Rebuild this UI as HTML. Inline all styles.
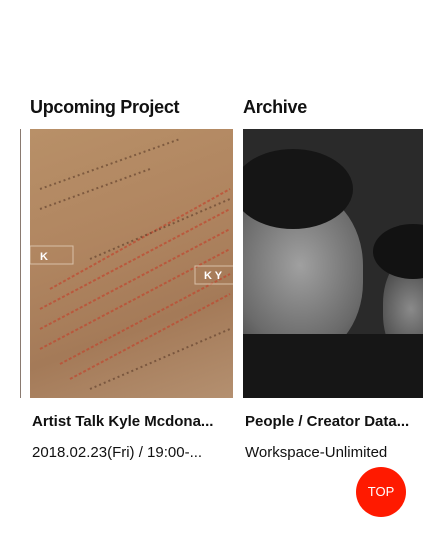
<!DOCTYPE html>
<html><head><meta charset="utf-8"><style>
*{margin:0;padding:0;box-sizing:border-box}
body{width:423px;height:540px;background:#fff;font-family:"Liberation Sans",Arial,sans-serif;position:relative;overflow:hidden;color:#111}
.h{position:absolute;top:97px;font-weight:bold;font-size:18px;letter-spacing:-0.3px}
.img{position:absolute;top:129px;height:269px}
.t{position:absolute;top:413px;font-weight:bold;font-size:15px;white-space:nowrap}
.s{position:absolute;top:444px;font-size:15px;white-space:nowrap}
.top{position:absolute;left:356px;top:467px;width:50px;height:50px;border-radius:50%;background:#ff1a00;color:#fff;font-size:13px;text-align:center;line-height:50px}
</style></head><body>
<div class="h" style="left:30px">Upcoming Project</div>
<div class="h" style="left:243px">Archive</div>
<div style="position:absolute;left:20px;top:129px;width:1px;height:269px;background:#8a7a70"></div>
<div class="img" style="left:30px;width:203px;background:linear-gradient(160deg,#b89068 0%,#b08560 40%,#a47a58 70%,#b49070 100%)">
<svg width="203" height="269" style="position:absolute;left:0;top:0">
<g stroke="#c04830" stroke-width="2" stroke-dasharray="3 2" opacity="0.7">
<line x1="20" y1="160" x2="200" y2="60"/><line x1="10" y1="180" x2="200" y2="80"/><line x1="10" y1="200" x2="200" y2="100"/><line x1="10" y1="220" x2="200" y2="120"/><line x1="30" y1="235" x2="200" y2="145"/><line x1="40" y1="250" x2="200" y2="165"/>
</g>
<g stroke="#5a3a28" stroke-width="2" stroke-dasharray="2 3" opacity="0.6">
<line x1="10" y1="60" x2="150" y2="10"/><line x1="10" y1="80" x2="120" y2="40"/><line x1="60" y1="260" x2="200" y2="200"/><line x1="60" y1="130" x2="200" y2="70"/>
</g>
<rect x="0" y="117" width="43" height="18" fill="none" stroke="#d8c0a8" stroke-width="1"/>
<text x="10" y="131" fill="#fff" font-size="11" font-weight="bold" font-family="Liberation Sans">K</text>
<rect x="165" y="137" width="40" height="18" fill="none" stroke="#d8c0a8" stroke-width="1"/>
<text x="174" y="150" fill="#fff" font-size="11" font-weight="bold" font-family="Liberation Sans">K Y</text>
</svg></div>
<div class="img" style="left:243px;width:180px;background:#2a2a2a;overflow:hidden">
<div style="position:absolute;left:-20px;top:60px;width:140px;height:170px;border-radius:45%;background:radial-gradient(ellipse at 55% 45%,#a0a0a0,#6a6a6a 60%,#353535)"></div>
<div style="position:absolute;left:-10px;top:20px;width:120px;height:80px;border-radius:50%;background:#151515"></div>
<div style="position:absolute;left:140px;top:125px;width:70px;height:110px;border-radius:45%;background:radial-gradient(ellipse at 40% 50%,#8a8a8a,#404040 70%)"></div>
<div style="position:absolute;left:130px;top:95px;width:80px;height:55px;border-radius:50%;background:#121212"></div>
<div style="position:absolute;left:0;top:205px;width:180px;height:70px;background:#161616"></div>
</div>
<div class="t" style="left:32px">Artist Talk Kyle Mcdona...</div>
<div class="s" style="left:32px">2018.02.23(Fri) / 19:00-...</div>
<div class="t" style="left:245px">People / Creator Data...</div>
<div class="s" style="left:245px">Workspace-Unlimited</div>
<div class="top">TOP</div>
</body></html>
